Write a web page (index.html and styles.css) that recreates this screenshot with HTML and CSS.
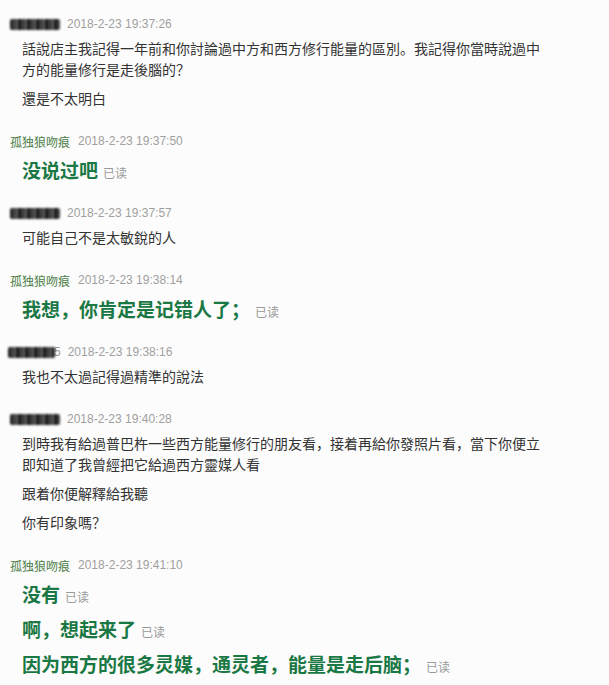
FILE: index.html
```html
<!DOCTYPE html>
<html lang="zh">
<head>
<meta charset="utf-8">
<link rel="stylesheet" href="styles.css">
</head>
<body>
<div class="chat">
  <div class="msg">
    <div class="head"><span class="blur"></span><span class="date">2018-2-23 19:37:26</span></div>
    <p class="text">話說店主我記得一年前和你討論過中方和西方修行能量的區別。我記得你當時說過中方的能量修行是走後腦的？</p>
    <p class="text">還是不太明白</p>
  </div>
  <div class="msg mine">
    <div class="head"><span class="name">孤独狼吻痕</span><span class="date">2018-2-23 19:37:50</span></div>
    <p class="big">没说过吧<span class="read">已读</span></p>
  </div>
  <div class="msg">
    <div class="head"><span class="blur"></span><span class="date">2018-2-23 19:37:57</span></div>
    <p class="text">可能自己不是太敏銳的人</p>
  </div>
  <div class="msg mine">
    <div class="head"><span class="name">孤独狼吻痕</span><span class="date">2018-2-23 19:38:14</span></div>
    <p class="big">我想，你肯定是记错人了；<span class="read">已读</span></p>
  </div>
  <div class="msg">
    <div class="head"><span class="blur shift"></span><span class="tail">5</span><span class="date">2018-2-23 19:38:16</span></div>
    <p class="text">我也不太過記得過精準的說法</p>
  </div>
  <div class="msg">
    <div class="head"><span class="blur"></span><span class="date">2018-2-23 19:40:28</span></div>
    <p class="text">到時我有給過普巴杵一些西方能量修行的朋友看，接着再給你發照片看，當下你便立即知道了我曾經把它給過西方靈媒人看</p>
    <p class="text">跟着你便解釋給我聽</p>
    <p class="text">你有印象嗎？</p>
  </div>
  <div class="msg mine">
    <div class="head"><span class="name">孤独狼吻痕</span><span class="date">2018-2-23 19:41:10</span></div>
    <p class="big">没有<span class="read">已读</span></p>
    <p class="big">啊，想起来了<span class="read">已读</span></p>
    <p class="big">因为西方的很多灵媒，通灵者，能量是走后脑；<span class="read">已读</span></p>
  </div>
</div>
</body>
</html>
```

FILE: styles.css
```css
html, body {
  margin: 0;
  padding: 0;
  background: #fcfcfc;
}
body {
  font-family: "Noto Sans CJK SC", sans-serif;
  color: #333;
}
.chat {
  padding: 14px 0 0 10px;
  width: 537px;
}
.msg {
  margin-bottom: 22px;
}
.msg.mine {
  margin-bottom: 20px;
}
.head {
  height: 20px;
  display: flex;
  align-items: center;
  gap: 7px;
}
.blur {
  display: inline-block;
  width: 50px;
  height: 11px;
  background: repeating-linear-gradient(90deg, #1e1e1e 0 3px, #6a6a6a 3px 4px, #2a2a2a 4px 6px, #888 6px 7px, #333 7px 9px);
  filter: blur(0.9px);
  border-radius: 2px;
}
.blur.shift {
  margin-left: -2px;
  width: 47px;
}
.tail {
  margin-left: -8px;
  font-family: "Liberation Sans", Arial, sans-serif;
  font-size: 12px;
  color: #999;
}
.name {
  font-size: 12px;
  color: #4b7d46;
  margin-right: 1px;
}
.date {
  font-family: "Liberation Sans", Arial, sans-serif;
  font-size: 12px;
  color: #a0a0a0;
}
.text {
  margin: 4px 0 0 12px;
  font-size: 14px;
  line-height: 21px;
}
.text + .text {
  margin-top: 8px;
}
.big {
  margin: 6px 0 0 12px;
  font-size: 19px;
  font-weight: bold;
  line-height: 26px;
  height: 26px;
  color: #1a7844;
}
.big + .big {
  margin-top: 9px;
}
.read {
  margin-left: 5px;
  font-size: 12px;
  line-height: 1;
  font-weight: normal;
  color: #9a9a9a;
}
```
